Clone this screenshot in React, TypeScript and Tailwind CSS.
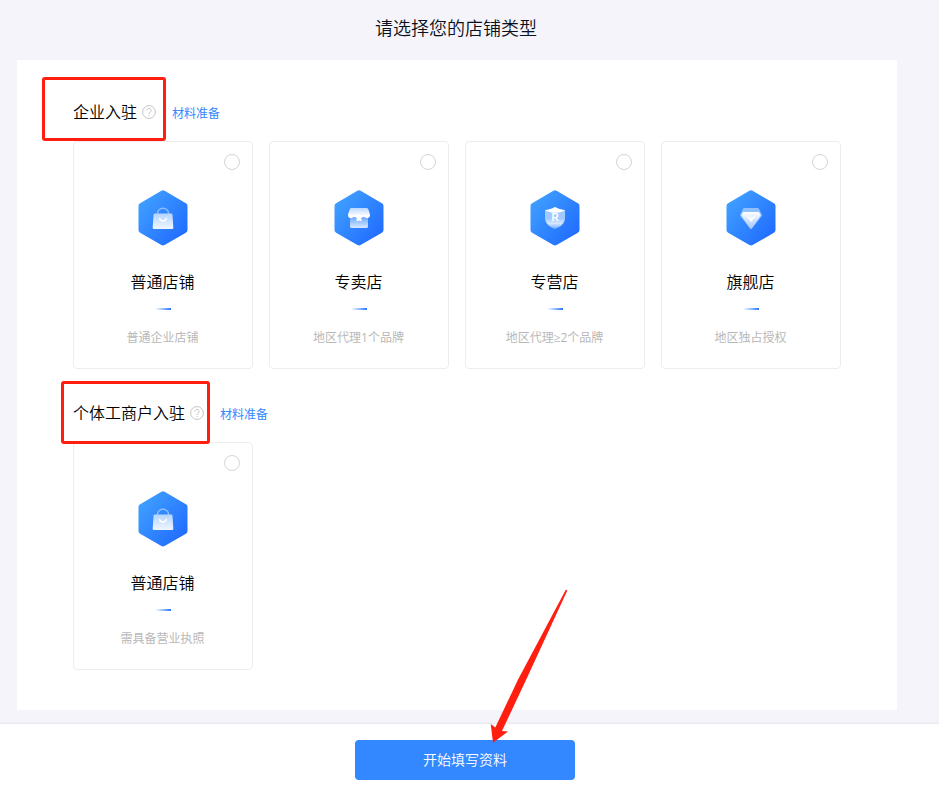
import { useState, type ReactNode } from "react";

type Shop = {
  id: string;
  name: string;
  desc: string;
  icon: ReactNode;
};

const BagIcon = () => (
  <>
    <path d="M22.5 24v-.8a5.500 4.900 0 0 1 11 0v.8" fill="none" stroke="#8cbeff" strokeWidth="1.500" />
    <path d="M20 23.600h16c.8 0 1.400.5 1.500 1.300l.8 12.500c.1.900-.6 1.600-1.500 1.600H19.200c-.9 0-1.600-.7-1.500-1.600l.8-12.500c.1-.8.7-1.300 1.500-1.300z" fill="url(#fade)" />
    <path d="M24.600 28.400a3.500 3.300 0 0 0 6.800 0" fill="none" stroke="#fff" strokeWidth="1.500" strokeLinecap="round" />
  </>
);

const StoreIcon = () => (
  <>
    <path d="M19 27h18v9.500c0 .9-.6 1.500-1.500 1.500h-15c-.9 0-1.500-.6-1.500-1.500z" fill="url(#fadeUp)" />
    <path d="M20.500 18h15c.8 0 1.400.4 1.700 1.100l1.500 4.400c.9 2.600-.4 4.500-2.400 4.500-1.200 0-2-.4-2.600-1h-11.400c-.6.6-1.400 1-2.600 1-2 0-3.300-1.900-2.400-4.500l1.500-4.400c.3-.7.900-1.100 1.700-1.100z" fill="url(#roof)" />
    <path d="M28 23.300l1.300 2.700 3 .4-2.200 2.100.5 3-2.600-1-2.600 1 .5-3-2.200-2.100 3-.4z" fill="#fff" />
  </>
);

const ShieldIcon = () => (
  <>
    <path d="M28 17c3 1.900 6 2.700 10 2.900v8.200c0 5-4 8.900-10 10.900-6-2-10-5.900-10-10.900v-8.200c4-.2 7-1 10-2.900z" fill="url(#shield)" />
    <path d="M28 17c3 1.900 6 2.700 10 2.900-2.500 1.800-6 2.900-10 2.900s-7.500-1.100-10-2.900c4-.2 7-1 10-2.900z" fill="#fff" />
    <text x="28" y="31.200" textAnchor="middle" fontSize="10" fontWeight="700" fontFamily="Liberation Sans, sans-serif" fill="#fff">R</text>
  </>
);

const DiamondIcon = () => (
  <>
    <path d="M21.200 18h13.600c.5 0 .8.200 1 .6l3 6.200c.3.500.2 1-.2 1.400L28.800 38.600c-.4.500-1.200.5-1.600 0L17.400 26.200c-.4-.4-.5-.9-.2-1.400l3-6.200c.2-.4.500-.6 1-.6z" fill="#8fbfff" />
    <path d="M20.800 22h14.400c.6 0 1 .3 1.300.8l1 1.800c.2.500.2.900-.2 1.300l-8.500 12.600c-.4.600-1.200.6-1.600 0L18.700 25.900c-.4-.4-.4-.8-.2-1.300l1-1.800c.3-.5.700-.8 1.300-.8z" fill="url(#gem)" />
    <path d="M24 26.400l4 1.500 4-1.500-4 5.300z" fill="#fff" stroke="#fff" strokeWidth=".5" strokeLinejoin="round" />
  </>
);

// gradients shared by every badge on the page
const IconDefs = () => (
  <svg className="absolute h-0 w-0" aria-hidden="true">
    <defs>
      <linearGradient id="hex" gradientUnits="userSpaceOnUse" x1="6" y1="10" x2="50" y2="46">
        <stop offset="0" stopColor="#3f9fff" />
        <stop offset="1" stopColor="#216cff" />
      </linearGradient>
      <linearGradient id="fade" x1="0" y1="0" x2="0" y2="1">
        <stop offset="0" stopColor="#b4d5ff" />
        <stop offset="1" stopColor="#f0f6ff" />
      </linearGradient>
      <linearGradient id="roof" x1="0" y1="0" x2="0" y2="1">
        <stop offset="0" stopColor="#b9d7ff" />
        <stop offset="0.8" stopColor="#ffffff" />
      </linearGradient>
      <linearGradient id="fadeUp" x1="0" y1="0" x2="0" y2="1">
        <stop offset="0" stopColor="#6ba8ff" />
        <stop offset="1" stopColor="#d8e8ff" />
      </linearGradient>
      <linearGradient id="shield" x1="0" y1="0" x2="0" y2="1">
        <stop offset="0.15" stopColor="#a4cbff" />
        <stop offset="0.5" stopColor="#a0c8ff" />
        <stop offset="0.75" stopColor="#d5e6ff" />
        <stop offset="1" stopColor="#6fa8ff" />
      </linearGradient>
      <linearGradient id="gem" x1="0" y1="0" x2="0" y2="1">
        <stop offset="0" stopColor="#ffffff" />
        <stop offset="1" stopColor="#9fc6ff" />
      </linearGradient>
    </defs>
  </svg>
);

const companyShops: Shop[] = [
  { id: "company-normal", name: "普通店铺", desc: "普通企业店铺", icon: <BagIcon /> },
  { id: "company-exclusive", name: "专卖店", desc: "地区代理1个品牌", icon: <StoreIcon /> },
  { id: "company-franchise", name: "专营店", desc: "地区代理≥2个品牌", icon: <ShieldIcon /> },
  { id: "company-flagship", name: "旗舰店", desc: "地区独占授权", icon: <DiamondIcon /> },
];

const personalShops: Shop[] = [
  { id: "personal-normal", name: "普通店铺", desc: "需具备营业执照", icon: <BagIcon /> },
];

type CardProps = { shop: Shop; selected: boolean; onSelect: () => void };

function ShopCard({ shop, selected, onSelect }: CardProps) {
  return (
    <button
      type="button"
      onClick={onSelect}
      className={`flex h-[228px] w-[180px] flex-col items-center rounded border bg-white pt-3 ${
        selected ? "border-[#3388ff]" : "border-[#ededed]"
      }`}
    >
      <span
        className={`mr-3 h-4 w-4 self-end rounded-full border ${
          selected ? "border-[#3388ff] bg-[#3388ff]" : "border-[#d4d4d4]"
        }`}
      />
      <svg className="mt-5 h-14 w-14" viewBox="0 0 56 56">
        <path
          d="M26.400.7q1.600-.9 3.200 0l21.300 12.500q1.600.9 1.600 2.700v24.200q0 1.800-1.600 2.700L29.600 55.100q-1.600.9-3.200 0L5.100 42.800q-1.600-.9-1.600-2.700V15.900q0-1.800 1.600-2.700z"
          fill="url(#hex)"
        />
        {shop.icon}
      </svg>
      <span className="mt-6 mr-px text-base leading-6 text-black">{shop.name}</span>
      <span className="mt-3.5 h-0.5 w-4 bg-linear-to-r from-white to-[#1f75ff]" />
      <span className="mt-[19px] mr-px text-xs leading-[18px] font-normal text-[#b8b8b8]">{shop.desc}</span>
    </button>
  );
}

type SectionProps = {
  title: string;
  shops: Shop[];
  selected: string | null;
  onSelect: (id: string) => void;
};

function Section({ title, shops, selected, onSelect }: SectionProps) {
  return (
    <section>
      <div className="mb-[17px] flex h-6 items-center">
        <h2 className="text-base leading-6 text-black">{title}</h2>
        <svg className="ml-[5px] h-3.5 w-3.5" viewBox="0 0 14 14" fill="none" stroke="#c4c4c4">
          <circle cx="7" cy="7" r="6.4" />
          <path d="M4.900 5.500a2.100 2.100 0 1 1 3.300 1.700C7.400 7.700 7 8.100 7 9" />
          <path d="M7 10v1.200" />
        </svg>
        <a href="#" className="ml-4 pt-1 text-xs font-normal text-[#3388ff]">材料准备</a>
      </div>
      <div className="flex gap-4">
        {shops.map((shop) => (
          <ShopCard
            key={shop.id}
            shop={shop}
            selected={selected === shop.id}
            onSelect={() => onSelect(shop.id)}
          />
        ))}
      </div>
    </section>
  );
}

export default function App() {
  const [selected, setSelected] = useState<string | null>(null);

  return (
    <div className="relative flex h-[788px] w-[939px] flex-col overflow-hidden bg-[#f4f4fa] font-['Open_Sans','Noto_Sans_CJK_SC',sans-serif] font-[350]">
      <IconDefs />

      {/* Page title */}
      <h1 className="mr-[43px] ml-4 h-[60px] text-center text-lg leading-[56px] text-[#0b1020]">
        请选择您的店铺类型
      </h1>

      {/* Shop types */}
      <main className="mr-[42px] ml-[17px] flex h-[650px] flex-col gap-8 bg-white px-14 pt-10">
        <Section title="企业入驻" shops={companyShops} selected={selected} onSelect={setSelected} />
        <Section title="个体工商户入驻" shops={personalShops} selected={selected} onSelect={setSelected} />
      </main>

      {/* Footer */}
      <footer className="mt-3.5 flex flex-1 items-start justify-center bg-white pt-4 pr-[9px] shadow-[0_0_3px_rgba(0,0,0,0.12)]">
        <button type="button" className="h-10 w-[220px] rounded bg-[#3388ff] text-sm text-white">
          开始填写资料
        </button>
      </footer>

      {/* Callouts */}
      <div className="pointer-events-none absolute top-[77px] left-[42px] h-16 w-[124px] rounded-[3px] border-3 border-[#ff1e10]" />
      <div className="pointer-events-none absolute top-[381px] left-[61px] h-[63px] w-[149px] rounded-[3px] border-3 border-[#ff1e10]" />
      <svg className="pointer-events-none absolute top-[585px] left-[485px] h-40 w-[90px]" viewBox="0 0 90 160">
        <path d="M80.800 4.800l1.500.8L41 95 17 146l6 .6L8 157.800 5.700 139l4.600 3.500L32.800 95z" fill="#ff1e10" />
      </svg>
    </div>
  );
}
